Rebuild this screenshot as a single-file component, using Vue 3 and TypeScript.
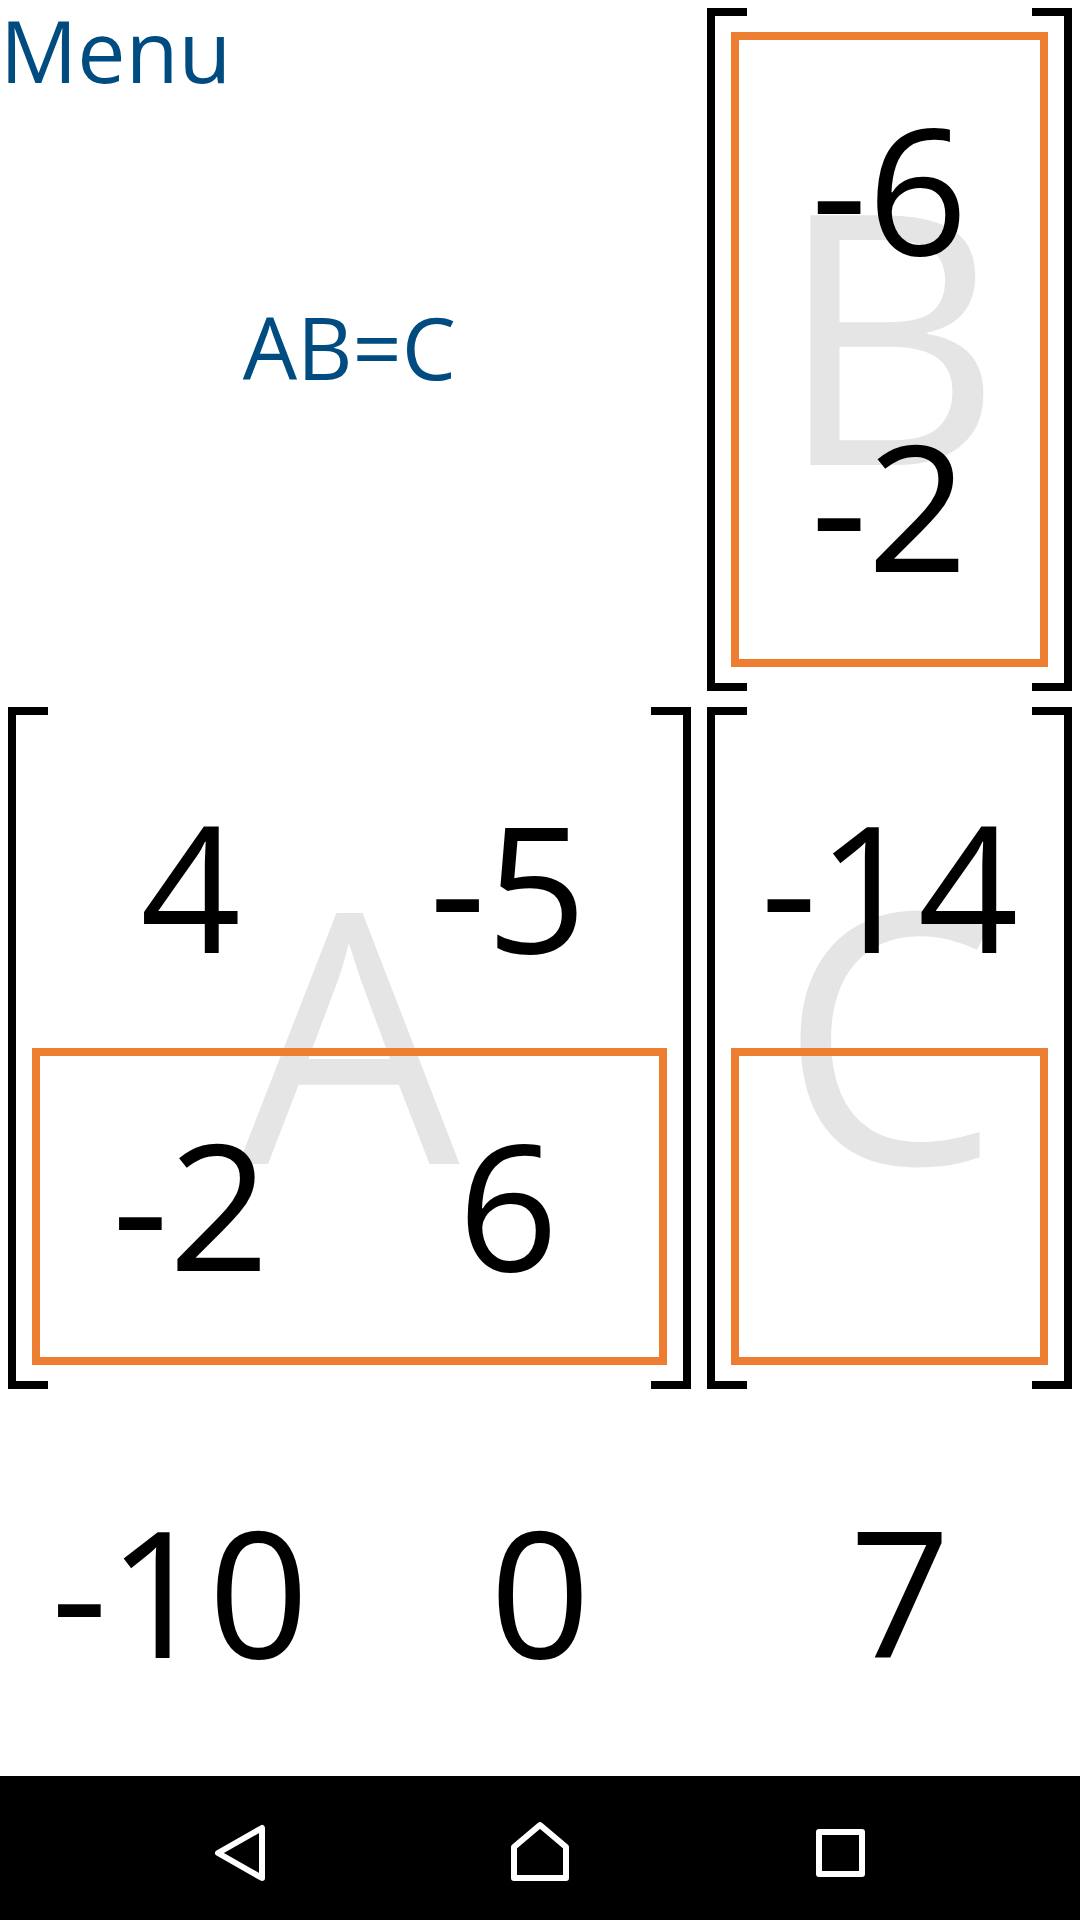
<script setup lang="ts">
import { ref } from 'vue'

interface Matrix {
  name: string
  rows: string[][]
  activeRows: number[]
  wholeActive: boolean
}

const matrixB: Matrix = { name: 'B', rows: [['-6'], ['-2']], activeRows: [], wholeActive: true }
const matrixA: Matrix = { name: 'A', rows: [['4', '-5'], ['-2', '6']], activeRows: [1], wholeActive: false }
const matrixC: Matrix = { name: 'C', rows: [['-14'], ['']], activeRows: [1], wholeActive: false }

const matrices = [matrixB, matrixA, matrixC]
const choices = ref<string[]>(['-10', '0', '7'])
</script>

<template>
  <div class="screen">
    <main class="board">
      <header class="intro">
        <button type="button" class="menu">Menu</button>
        <h1 class="equation">AB=C</h1>
      </header>

      <section v-for="m in matrices" :key="m.name" class="matrix">
        <span class="watermark" aria-hidden="true">{{ m.name }}</span>
        <table :aria-label="'Matrix ' + m.name">
          <tbody :class="{ active: m.wholeActive }">
            <tr v-for="(row, r) in m.rows" :key="r" :class="{ active: m.activeRows.includes(r) }">
              <td v-for="(value, c) in row" :key="c">{{ value }}</td>
            </tr>
          </tbody>
        </table>
      </section>
    </main>

    <section class="choices" aria-label="Answers">
      <button v-for="choice in choices" :key="choice" type="button">{{ choice }}</button>
    </section>

    <nav class="system-bar" aria-label="System">
      <button type="button" aria-label="Back">
        <svg viewBox="0 0 72 72"><path d="M14 41 58 16v50z" /></svg>
      </button>
      <button type="button" aria-label="Home">
        <svg viewBox="0 0 72 72"><path d="M10 66V35L36 13l26 22V66z" /></svg>
      </button>
      <button type="button" aria-label="Recent apps">
        <svg viewBox="0 0 72 72"><path d="M15 20h43v42H15z" /></svg>
      </button>
    </nav>
  </div>
</template>

<style>
body {
  margin: 0;
  background: #fff;
}
</style>

<style scoped>
.screen {
  display: flex;
  flex-direction: column;
  min-height: 100vh;
  font-family: "Open Sans", "Noto Sans", sans-serif;
  color: #000;
}

button {
  margin: 0;
  padding: 0;
  border: 0;
  background: none;
  color: inherit;
  font: inherit;
  cursor: pointer;
}

/* Three square cells across, plus the bracket gutters of two matrices. */
.board {
  display: grid;
  grid-template-columns: calc((100% - 128px) * 2 / 3 + 64px) 1fr;
}

.intro {
  display: grid;
  color: #004c80;
  font-size: 86px;
}

.menu,
.equation {
  grid-area: 1 / 1;
}

.menu {
  place-self: start;
  line-height: 100px;
}

.equation {
  place-self: center;
  margin: 0;
  padding-bottom: 6px;
  font-size: inherit;
  font-weight: 400;
}

.matrix {
  position: relative;
  margin: 8px;
  padding: 24px;
}

.matrix::before,
.matrix::after {
  content: "";
  position: absolute;
  top: 0;
  bottom: 0;
  box-sizing: border-box;
  width: 40px;
  border: 8px solid #000;
}

.matrix::before {
  left: 0;
  border-right: 0;
}

.matrix::after {
  right: 0;
  border-left: 0;
}

.watermark {
  position: absolute;
  inset: 0;
  display: flex;
  align-items: center;
  justify-content: center;
  padding-bottom: 38px;
  color: #e5e5e5;
  font-size: 350px;
  line-height: 1;
}

table {
  position: relative;
  display: block;
}

tbody {
  display: grid;
}

tr {
  display: grid;
  grid-auto-flow: column;
  grid-auto-columns: 1fr;
}

td {
  display: flex;
  align-items: center;
  justify-content: center;
  box-sizing: border-box;
  min-width: 0;
  aspect-ratio: 1;
  padding: 0 0 8px;
  font-size: 176px;
  line-height: 1;
}

.active {
  box-shadow: inset 0 0 0 8px #ed7d31;
}

.choices {
  flex: 1;
  display: grid;
  grid-template-columns: repeat(3, 1fr);
  padding-top: 6px;
  font-size: 176px;
  line-height: 1;
}

.system-bar {
  display: flex;
  align-items: center;
  height: 144px;
  padding: 0 calc(100% / 12);
  background: #000;
}

.system-bar button {
  flex: 1;
  display: flex;
  justify-content: center;
}

.system-bar svg {
  width: 72px;
  height: 72px;
  fill: none;
  stroke: #fff;
  stroke-width: 6;
  stroke-linejoin: round;
}
</style>
